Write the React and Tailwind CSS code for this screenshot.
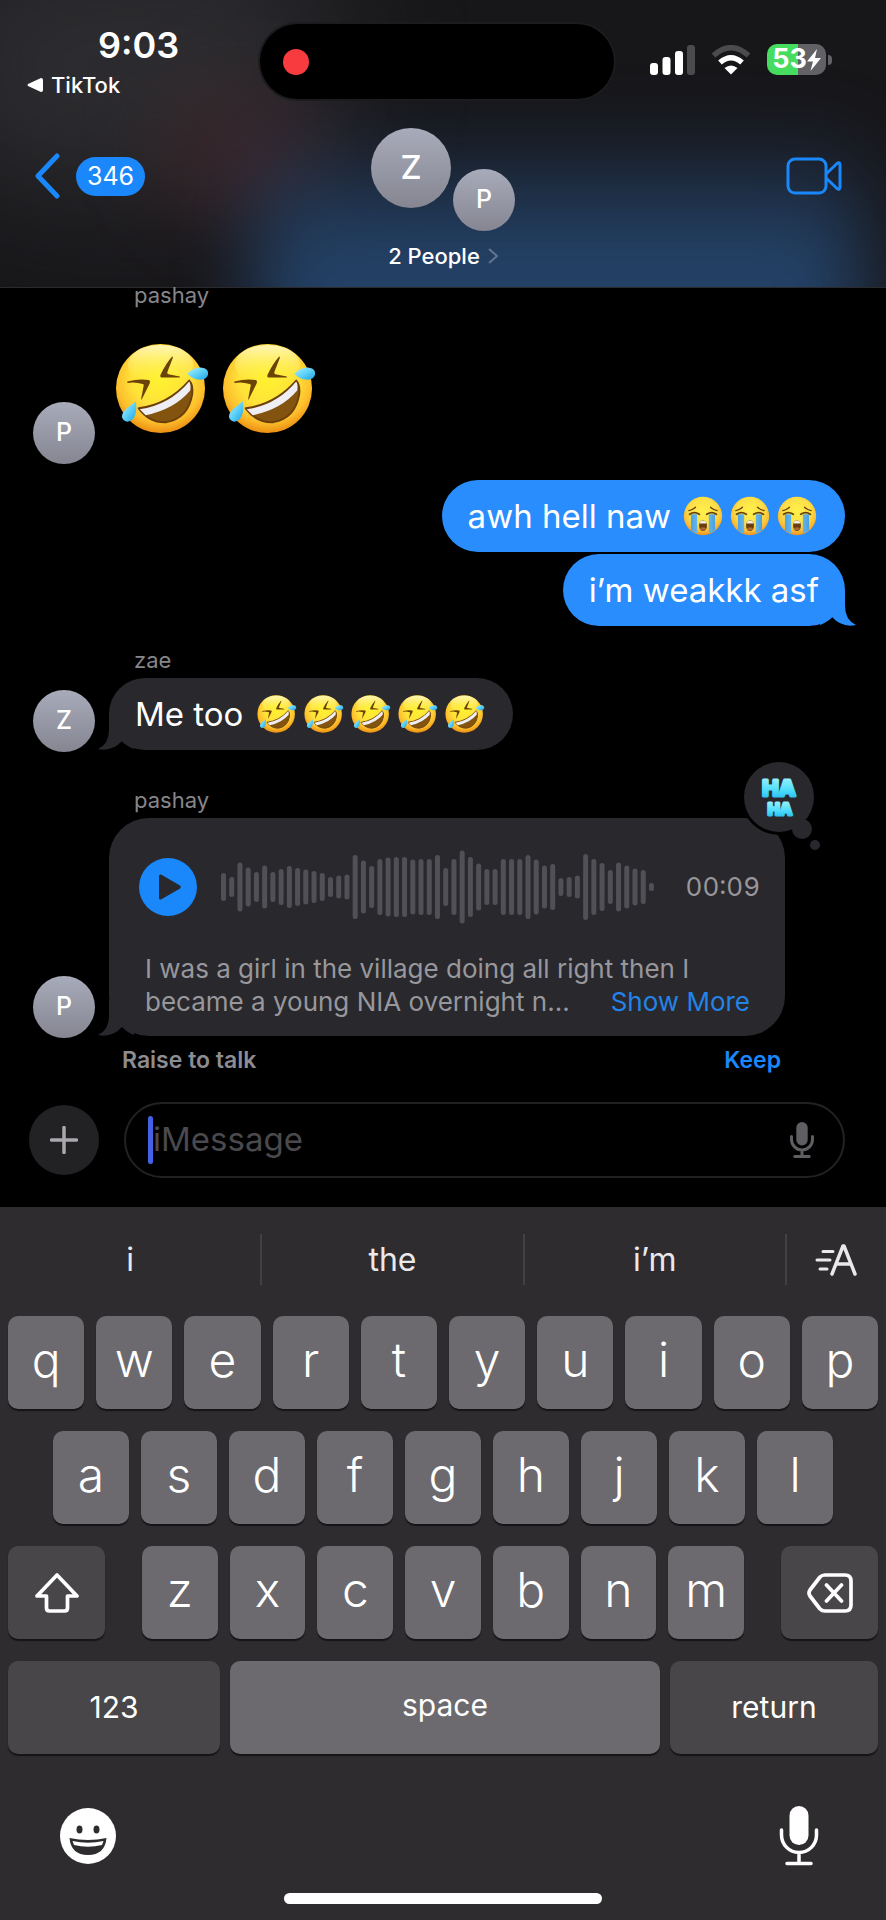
import { useId } from 'react'

const BARS = [
  28, 20, 49, 39, 30, 43, 30, 36, 42, 38, 35, 32, 28, 20, 23, 25, 64, 53, 42, 56, 59, 60, 60, 55, 56, 56, 64,
  38, 56, 73, 60, 47, 36, 36, 56, 56, 56, 64, 55, 43, 46, 18, 20, 23, 66, 56, 48, 34, 49, 43, 37, 34, 8,
]

// Rolling on the floor laughing
function Rofl({ className }) {
  const id = useId()
  return (
    <svg viewBox="0 0 96 96" className={className} role="img" aria-label="🤣">
      <defs>
        <radialGradient id={`${id}f`} cx="0.5" cy="0.38" r="0.64">
          <stop offset="0" stopColor="#fff22e" />
          <stop offset="0.5" stopColor="#ffe23a" />
          <stop offset="0.78" stopColor="#fdbf2c" />
          <stop offset="1" stopColor="#e8860f" />
        </radialGradient>
        <linearGradient id={`${id}h`} x1="0" y1="0" x2="0" y2="1">
          <stop offset="0" stopColor="#fffbd0" stopOpacity="0.85" />
          <stop offset="1" stopColor="#fff23a" stopOpacity="0" />
        </linearGradient>
        <linearGradient id={`${id}t`} x1="0" y1="0" x2="1" y2="1">
          <stop offset="0" stopColor="#b5f0ff" />
          <stop offset="0.5" stopColor="#5ed2f8" />
          <stop offset="1" stopColor="#1f9fe0" />
        </linearGradient>
      </defs>
      <circle cx="46" cy="48" r="45" fill={`url(#${id}f)`} />
      <ellipse cx="46" cy="24" rx="33" ry="20" fill={`url(#${id}h)`} />
      <path d="M12.500 41 Q24 38 34 39.500 Q36 40 35 43 L27 59 Q26.500 60 26.500 58 L29 45 Q29.500 44 28 43.500 Q20 41 12.500 42.500Z" fill="#6b4208" />
      <path d="M58 15.500 Q52 22 46 34 Q45 37 48 37 L65 37 Q67 36 64 35.500 L54 33.500 Q52 33 53 31 L58.500 17Z" fill="#6b4208" />
      <path d="M24 68 Q54 64 75 40 Q79 44 78 54 Q74 78 52 82 Q35 83 24 68Z" fill="#83540f" stroke="#6b3f0a" strokeWidth="2" strokeLinejoin="round" />
      <path d="M25 69 Q55 65 75 41 Q77 44 76 50 Q60 69 31 75Z" fill="#eeeef4" />
      <path d="M21 61 Q23 73 18 79 Q12 84 8 79 Q5 74 12 68 Q18 64 21 61Z" fill={`url(#${id}t)`} />
      <path d="M73 33 Q80 26 88 27 Q95 28 94 34 Q92 40 84 39 Q78 38 73 33Z" fill={`url(#${id}t)`} />
    </svg>
  )
}

// Loudly crying
function Sob({ className }) {
  const id = useId()
  return (
    <svg viewBox="0 0 96 96" className={className} role="img" aria-label="😭">
      <defs>
        <radialGradient id={`${id}f`} cx="0.5" cy="0.38" r="0.64">
          <stop offset="0" stopColor="#fff04a" />
          <stop offset="0.55" stopColor="#fee048" />
          <stop offset="0.8" stopColor="#fbbd34" />
          <stop offset="1" stopColor="#ec8a1a" />
        </radialGradient>
        <linearGradient id={`${id}t`} x1="0" y1="0" x2="1" y2="0">
          <stop offset="0" stopColor="#4aa3e2" />
          <stop offset="0.5" stopColor="#7cc6f2" />
          <stop offset="1" stopColor="#4aa0de" />
        </linearGradient>
      </defs>
      <circle cx="48" cy="48" r="46" fill={`url(#${id}f)`} />
      <path d="M19 44H34V90Q26 87 19 82Z M62 44H77V82Q70 87 62 90Z" fill={`url(#${id}t)`} />
      <g fill="none" stroke="#6b4208" strokeLinecap="round">
        <path d="M16 44Q27 36 39 44M80 44Q69 36 57 44" strokeWidth="4.500" />
        <path d="M14 35Q24 33 30 27M82 35Q72 33 66 27" strokeWidth="3" />
      </g>
      <ellipse cx="48" cy="71" rx="9.500" ry="13" fill="#6b3d0c" />
      <path d="M40 66Q41 59 48 59Q55 59 56 66Z" fill="#f2eee6" />
      <ellipse cx="48" cy="79" rx="7" ry="4" fill="#a86a34" />
    </svg>
  )
}

function Mic({ className, stroke = 3.5 }) {
  return (
    <svg viewBox="0 0 40 60" className={className} fill="none" stroke="currentColor" strokeWidth={stroke} strokeLinecap="round" aria-hidden="true">
      <rect x="10.500" y="0" width="19" height="39" rx="9.500" fill="currentColor" stroke="none" />
      <path d="M2.500 24v5a17.500 17.500 0 0 0 35 0v-5M20 47v9M8 57.500h24" />
    </svg>
  )
}

const AVATAR_SIZES = {
  md: 'size-[62px] text-[25px]',
  lg: 'size-20 text-[33px]',
}

function Avatar({ letter, size = 'md', className = '' }) {
  return (
    <div className={`flex shrink-0 items-center justify-center rounded-full bg-linear-to-b from-[#a8abba] to-[#868692] font-medium text-white ${AVATAR_SIZES[size]} ${className}`}>
      {letter}
    </div>
  )
}

// Small curl at the bottom corner of the last bubble in a group
function Tail({ side, className }) {
  const place = side === 'right' ? '-right-[11px]' : '-left-[11px] -scale-x-100'
  return (
    <svg viewBox="0 0 36 36" className={`absolute bottom-0 size-9 ${place} ${className}`} aria-hidden="true">
      <path d="M0 0H25V16Q25 30 36 35Q22 38 12 27Q6 33 0 35Z" fill="currentColor" />
    </svg>
  )
}

function StatusBar() {
  return (
    <div className="flex h-[124px] items-start justify-between pt-6">
      <div className="flex w-[260px] flex-col">
        <div className="pl-[98px] text-[36px] leading-[42px] font-semibold">9:03</div>
        <a href="#tiktok" className="flex items-center gap-2 pl-[27px] text-[22px] leading-[38px] font-medium">
          <svg viewBox="0 0 16 14" className="h-3.5 w-4" aria-hidden="true"><path d="M14 0Q16 0 16 2V12Q16 14 14 14L1 8Q0 7 1 6Z" fill="white" /></svg>
          TikTok
        </a>
      </div>
      <div className="flex h-[75px] w-[354px] items-center rounded-full bg-black pl-[23px] ring-2 ring-[#1c1b1e]">
        <span className="size-[26px] rounded-full bg-[#f83b3f]" />
      </div>
      <div className="flex w-[272px] items-center gap-4 pt-5 pl-9">
        <svg viewBox="0 0 45 30" className="h-[30px] w-[45px]" aria-hidden="true">
          <rect x="0" y="18" width="8" height="12" rx="3" fill="white" />
          <rect x="12.500" y="12" width="8" height="18" rx="3" fill="white" />
          <rect x="25" y="6" width="8" height="24" rx="3" fill="white" />
          <rect x="37" y="0" width="8" height="30" rx="3" fill="#4b4a4d" />
        </svg>
        <svg viewBox="0 0 40 30" className="h-[30px] w-10" fill="none" aria-hidden="true">
          <path d="M2.500 10.500Q20 -5 37.500 10.500" stroke="#4b4a4d" strokeWidth="5.500" />
          <path d="M9 17.500Q20 8 31 17.500" stroke="white" strokeWidth="5.500" />
          <path d="M13.500 23Q20 18 26.500 23L20 29.500Z" fill="white" />
        </svg>
        <div className="flex items-center gap-0.5">
          <div className="flex h-[31px] w-[59px] items-center justify-center rounded-[10px] bg-linear-to-r from-[#45dc5f] from-53% to-[#626165] to-53% text-[27px] font-bold">
            53
            <svg viewBox="0 0 14 22" className="h-[22px] w-3.5 shrink-0" aria-hidden="true"><path d="M10 0L0 12.500H6L3.500 22L14 9H8Z" fill="white" /></svg>
          </div>
          <span className="h-2.5 w-1 rounded-r-full bg-[#626165]" />
        </div>
      </div>
    </div>
  )
}

function Header() {
  return (
    <header className="relative h-72 overflow-hidden border-b border-[#2b2b2e] bg-[#171619]">
      <div className="absolute -top-16 -left-20 h-64 w-[420px] rounded-full bg-[#36363a] opacity-70 blur-3xl" />
      <div className="absolute top-24 left-40 h-28 w-40 rounded-full bg-[#47262b] opacity-60 blur-2xl" />
      <div className="absolute top-[125px] right-6 left-[256px] h-60 bg-linear-to-b from-transparent to-[#264a76] to-50% opacity-85 blur-2xl" />
      <div className="relative">
        <StatusBar />
        <div className="flex items-start justify-between pr-11 pl-8">
          <button className="mt-[29px] flex w-[172px] items-center gap-4" aria-label="Back, 346 unread">
            <svg viewBox="0 0 28 46" className="h-[46px] w-7" fill="none" stroke="#1a87fb" strokeWidth="5" strokeLinecap="round" strokeLinejoin="round" aria-hidden="true">
              <path d="M25 3L6 23L25 43" />
            </svg>
            <span className="rounded-full bg-[#1a87fb] px-[11px] text-[25px] leading-[39px]">346</span>
          </button>
          <button className="flex flex-col items-center pt-1">
            <span className="flex gap-0.5">
              <Avatar letter="Z" size="lg" />
              <Avatar letter="P" className="mt-[41px]" />
            </span>
            <span className="mt-[9px] flex items-center gap-2 text-[22px] leading-8 font-medium">
              2 People
              <svg viewBox="0 0 10 16" className="h-4 w-2.5" fill="none" stroke="#5f7590" strokeWidth="2" aria-hidden="true"><path d="M1 1L9 8L1 15" /></svg>
            </span>
          </button>
          <button className="mt-[33px] flex w-40 justify-end" aria-label="FaceTime">
            <svg viewBox="0 0 56 38" className="h-[38px] w-14" fill="none" stroke="#1a87fb" strokeWidth="3" strokeLinejoin="round" aria-hidden="true">
              <rect x="2" y="2" width="38" height="34" rx="7" />
              <path d="M40 17L51 6.500Q54 4.500 54 8V30Q54 33.500 51 31.500L40 21" />
            </svg>
          </button>
        </div>
      </div>
    </header>
  )
}

function Haha() {
  return (
    <svg viewBox="0 0 80 90" className="absolute -top-[57px] -right-[38px] h-[90px] w-20" role="img" aria-label="Ha ha">
      <defs>
        <linearGradient id="haha" x1="0" y1="0" x2="0" y2="1">
          <stop offset="0" stopColor="#a8f6ff" />
          <stop offset="0.6" stopColor="#4bdcfb" />
          <stop offset="1" stopColor="#1fb4ec" />
        </linearGradient>
      </defs>
      <circle cx="36" cy="36" r="38" fill="black" />
      <circle cx="36" cy="36" r="35" fill="#29282c" />
      <circle cx="59" cy="68" r="10" fill="#29282c" />
      <circle cx="72" cy="84" r="5" fill="#29282c" />
      <g fill="url(#haha)" stroke="url(#haha)" strokeWidth="3" strokeLinejoin="round" fontFamily="Inter, sans-serif" fontWeight="800" textAnchor="middle">
        <text x="36" y="35" fontSize="22">HA</text>
        <text x="37" y="54" fontSize="16">HA</text>
      </g>
    </svg>
  )
}

function VoiceMessage() {
  return (
    <div className="relative h-[218px] w-[676px] rounded-[40px] bg-[#29282c] pt-8 pr-[25px] pl-[30px] text-[#98979c]">
      <Tail side="left" className="text-[#29282c]" />
      <Haha />
      <div className="flex h-[73px] items-center">
        <button className="flex size-[58px] shrink-0 items-center justify-center rounded-full bg-[#1a87fb]" aria-label="Play">
          <svg viewBox="0 0 22 26" className="ml-1 h-[26px] w-[22px]" aria-hidden="true"><path d="M2 0.500L21 11.500Q22.500 13 21 14.500L2 25.500Q0 26 0 24V2Q0 0 2 0.500Z" fill="#29282c" /></svg>
        </button>
        <svg viewBox="0 0 434 74" className="ml-6 h-[74px] w-[434px] shrink-0" aria-hidden="true">
          {BARS.map((h, i) => (
            <rect key={i} x={i * 8.23} y={37 - h / 2} width="5" height={h} rx="2.500" fill="#515056" />
          ))}
        </svg>
        <span className="ml-auto text-[26px] tabular-nums">00:09</span>
      </div>
      <div className="mt-[29px] flex items-end justify-between pr-[10px] pl-1.5 text-[26px] leading-[33px]">
        <p className="whitespace-nowrap">I was a girl in the village doing all right then I<br />became a young NIA overnight n...</p>
        <button className="-ml-40 whitespace-nowrap text-[#2383e8]">Show More</button>
      </div>
    </div>
  )
}

function Sender({ children }) {
  return <div className="relative pl-[134px] text-[22px] leading-7 text-[#87868b]">{children}</div>
}

function Conversation() {
  return (
    <main className="bg-black pb-[29px]">
      <div className="-mt-[7px]"><Sender>pashay</Sender></div>
      <div className="mt-8 flex h-[123px] items-end gap-5 pl-[33px]">
        <Avatar letter="P" />
        <div className="flex gap-3 self-start">
          <Rofl className="size-[95px]" />
          <Rofl className="size-[95px]" />
        </div>
      </div>
      <div className="mt-4 flex flex-col items-end gap-0.5 pr-[41px] text-[33px] leading-[72px]">
        <div className="flex items-center gap-3 rounded-full bg-[#298dfd] pr-7 pl-[26px]">
          awh hell naw
          <span className="flex gap-[7px]">
            <Sob className="size-10" />
            <Sob className="size-10" />
            <Sob className="size-10" />
          </span>
        </div>
        <div className="relative rounded-full bg-[#298dfd] px-[26px]">
          <Tail side="right" className="text-[#298dfd]" />
          <span className="relative">i’m weakkk asf</span>
        </div>
      </div>
      <div className="mt-5"><Sender>zae</Sender></div>
      <div className="mt-1 flex items-end gap-3.5 pl-[33px]">
        <Avatar letter="Z" className="-mb-0.5" />
        <div className="relative flex items-center gap-3.5 rounded-full bg-[#29282c] pr-7 pl-[26px] text-[33px] leading-[72px]">
          <Tail side="left" className="text-[#29282c]" />
          <span className="relative">Me too</span>
          <span className="flex gap-[7px]">
            {[0, 1, 2, 3, 4].map((n) => <Rofl key={n} className="size-10" />)}
          </span>
        </div>
      </div>
      <div className="mt-9"><Sender>pashay</Sender></div>
      <div className="mt-1 flex items-end gap-3.5 pl-[33px]">
        <Avatar letter="P" className="-mb-0.5" />
        <VoiceMessage />
      </div>
      <div className="mt-2 flex justify-between pr-[105px] pl-[122px] text-[23px] leading-8 font-semibold">
        <span className="text-[#8d8c91]">Raise to talk</span>
        <button className="text-[#1a87fb]">Keep</button>
      </div>
      <div className="mt-[26px] flex items-center gap-[25px] pr-[41px] pl-[29px]">
        <button className="flex size-[70px] shrink-0 items-center justify-center rounded-full bg-[#222124]" aria-label="Add">
          <svg viewBox="0 0 28 28" className="size-7" stroke="#a9a9ad" strokeWidth="3.500" strokeLinecap="round" aria-hidden="true"><path d="M14 1.500V26.500M1.500 14H26.500" /></svg>
        </button>
        <div className="flex h-[76px] grow items-center rounded-full border-2 border-[#222124] pr-[29px] pl-[22px]">
          <span className="h-12 w-[5px] rounded-full bg-[#4562e6]" />
          <input aria-label="iMessage" placeholder="iMessage" className="min-w-0 grow bg-transparent text-[33px] outline-none placeholder:text-[#4a494d]" />
          <button aria-label="Dictate"><Mic stroke={5} className="h-9 w-6 text-[#5f5e62]" /></button>
        </div>
      </div>
    </main>
  )
}

const KEY = 'flex h-[93px] items-center justify-center rounded-[10px] shadow-[0_2px_1px_#151417]'

function Letters({ row }) {
  return [...row].map((ch) => (
    <button key={ch} className={`${KEY} min-w-0 flex-1 bg-[#6c6a6e] pb-1.5 text-[48px] font-light`}>{ch}</button>
  ))
}

function Keyboard() {
  return (
    <section className="grow bg-[#2e2c2f] px-2 pt-[27px]">
      <div className="-mx-2 flex h-[51px] items-center text-[32px] text-[#e9e9eb]">
        {['i', 'the', 'i’m'].map((word) => (
          <button key={word} className="h-full flex-1 border-r-2 border-[#414043]">{word}</button>
        ))}
        <button className="flex h-full w-[99px] items-center justify-center" aria-label="Text formatting">
          <svg viewBox="0 0 42 32" className="h-8 w-[42px]" fill="none" stroke="currentColor" strokeWidth="3.500" strokeLinecap="round" strokeLinejoin="round" aria-hidden="true">
            <path d="M17 30L28 2H29L40 30M21 20H36" />
            <path d="M8 7.500H18M2 16H15M5 25H12" strokeWidth="3" />
          </svg>
        </button>
      </div>
      <div className="mt-[31px] flex flex-col gap-[22px]">
        <div className="flex gap-3"><Letters row="qwertyuiop" /></div>
        <div className="flex gap-3 px-[45px]"><Letters row="asdfghjkl" /></div>
        <div className="flex justify-between gap-[37px]">
          <button className={`${KEY} w-[97px] bg-[#484649]`} aria-label="Shift">
            <svg viewBox="0 0 44 40" className="h-10 w-11" fill="none" stroke="white" strokeWidth="3.700" strokeLinejoin="round" aria-hidden="true">
              <path d="M22 2L42 23H32.500V35Q32.500 38 29.500 38H14.500Q11.500 38 11.500 35V23H2Z" />
            </svg>
          </button>
          <div className="flex grow gap-3"><Letters row="zxcvbnm" /></div>
          <button className={`${KEY} w-[97px] bg-[#484649]`} aria-label="Delete">
            <svg viewBox="0 0 46 40" className="h-10 w-[46px]" fill="none" stroke="white" strokeWidth="3.700" strokeLinecap="round" strokeLinejoin="round" aria-hidden="true">
              <path d="M18 2H38Q44 2 44 8V32Q44 38 38 38H18Q15 38 13 36L3 23Q1 20 3 17L13 4Q15 2 18 2ZM19.500 12L34.500 28M34.500 12L19.500 28" />
            </svg>
          </button>
        </div>
        <div className="flex gap-2.5 text-[30px]">
          <button className={`${KEY} w-[212px] bg-[#484649]`}>123</button>
          <button className={`${KEY} grow bg-[#6c6a6e] pb-1`}>space</button>
          <button className={`${KEY} w-[208px] bg-[#484649]`}>return</button>
        </div>
      </div>
      <div className="mt-[52px] flex items-center justify-between pr-[59px] pl-[52px]">
        <button aria-label="Emoji">
          <svg viewBox="0 0 56 56" className="size-14" aria-hidden="true">
            <circle cx="28" cy="28" r="28" fill="white" />
            <ellipse cx="19.500" cy="21.500" rx="3" ry="4" fill="#2e2c2f" />
            <ellipse cx="36.500" cy="21.500" rx="3" ry="4" fill="#2e2c2f" />
            <path d="M9.500 30Q28 34 46.500 30Q45 47 28 47Q11 47 9.500 30Z" fill="#2e2c2f" />
            <path d="M12.500 33Q28 36.500 43.500 33L42 37Q28 40.500 14 37Z" fill="white" />
          </svg>
        </button>
        <button aria-label="Dictation"><Mic className="h-[60px] w-10 text-white" /></button>
      </div>
      <div className="mx-auto mt-[27px] mb-4 h-[11px] w-[318px] rounded-full bg-white" />
    </section>
  )
}

export default function App() {
  return (
    <div className="flex min-h-screen flex-col bg-black font-[Inter,'Liberation_Sans',sans-serif] text-white">
      <Header />
      <Conversation />
      <Keyboard />
    </div>
  )
}
